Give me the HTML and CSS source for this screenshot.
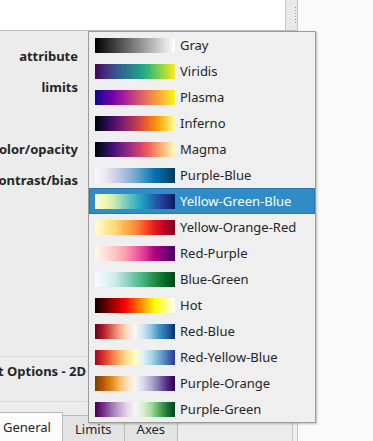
FILE: index.html
```html
<!DOCTYPE html>
<html lang="en">
<head>
    <meta charset="UTF-8">
    <meta name="viewport" content="width=device-width, initial-scale=1.0">
    <title>Colormap Picker</title>
    <link rel="stylesheet" href="styles.css">
</head>
<body>

<div class="left">
    <!-- top widget with its scrollbar -->
    <div class="top-row">
        <div class="top-white"></div>
        <div class="top-scroll"><span class="grip"></span></div>
    </div>

    <!-- settings panel -->
    <div class="panel">
        <div class="form">
            <div class="label-row"><span>attribute</span></div>
            <div class="label-row"><span>limits</span></div>
            <div class="label-row"></div>
            <div class="label-row"><span>color/opacity</span></div>
            <div class="label-row"><span>contrast/bias</span></div>
        </div>

        <div class="group-title"><span>Plot Options - 2D</span></div>

        <div class="tabs">
            <div class="tab active">General</div>
            <div class="tab">Limits</div>
            <div class="tab">Axes</div>
        </div>
    </div>
</div>

<div class="right"></div>

<!-- Colormap dropdown -->
<ul class="popup">
    <li><span class="swatch cm-gray"></span>Gray</li>
    <li><span class="swatch cm-viridis"></span>Viridis</li>
    <li><span class="swatch cm-plasma"></span>Plasma</li>
    <li><span class="swatch cm-inferno"></span>Inferno</li>
    <li><span class="swatch cm-magma"></span>Magma</li>
    <li><span class="swatch cm-pubu"></span>Purple-Blue</li>
    <li class="selected"><span class="swatch cm-ylgnbu"></span>Yellow-Green-Blue</li>
    <li><span class="swatch cm-ylorrd"></span>Yellow-Orange-Red</li>
    <li><span class="swatch cm-rdpu"></span>Red-Purple</li>
    <li><span class="swatch cm-bugn"></span>Blue-Green</li>
    <li><span class="swatch cm-hot"></span>Hot</li>
    <li><span class="swatch cm-rdbu"></span>Red-Blue</li>
    <li><span class="swatch cm-rdylbu"></span>Red-Yellow-Blue</li>
    <li><span class="swatch cm-puor"></span>Purple-Orange</li>
    <li><span class="swatch cm-prgn"></span>Purple-Green</li>
</ul>

</body>
</html>
```

FILE: styles.css
```css
* { margin: 0; padding: 0; box-sizing: border-box; }
html, body { width: 373px; height: 441px; overflow: hidden; }
body { display: flex; font-family: "Noto Sans", "DejaVu Sans", sans-serif; font-size: 13px; color: #232629; background: #fafafa; position: relative; }

.left { width: 298px; display: flex; flex-direction: column; border-right: 1px solid #c4c4c4; }
.top-row { display: flex; height: 31px; border-bottom: 1px solid #bdbdbd; }
.top-white { flex: 1; background: #fff; }
.top-scroll { width: 12px; background: #e9e9e9; border-left: 1px solid #c4c4c4; position: relative; }
.grip { position: absolute; left: 9px; top: 7px; width: 1px; height: 17px; background: repeating-linear-gradient(#9a9a9a 0 1px, transparent 1px 3px); }

.panel { flex: 1; display: flex; flex-direction: column; background: linear-gradient(to right, #ececec 0 292px, #c8c8c8 292px 293px, #f0f0f0 293px); }
.form { padding-top: 9px; }
.label-row { height: 31px; width: 78px; display: flex; justify-content: flex-end; align-items: center; overflow: hidden; white-space: nowrap; font-weight: bold; }

.group-title { margin-top: 161px; height: 46px; width: 88px; border-top: 1px solid #d8d8d8; border-bottom: 1px solid #d8d8d8; display: flex; justify-content: flex-end; align-items: flex-start; padding-top: 5px; overflow: hidden; white-space: nowrap; font-weight: bold; padding-right: 2px; }

.tabs { margin-top: 10px; display: flex; align-items: flex-end; height: 29px; }
.tab { height: 26px; padding: 4px 12px 0; background: #e3e3e3; border: 1px solid #b9b9b9; border-bottom: none; border-left: none; }
.tab.active { height: 29px; width: 63px; background: #fcfcfc; padding: 5px 0 0 3px; }

.right { flex: 1; background: #fafafa; }

.popup { position: absolute; left: 88px; top: 31px; width: 228px; height: 392px; list-style: none; background: #efefef; border: 1px solid #9b9b9b; box-shadow: 1px 1px 2px rgba(0, 0, 0, 0.25); }
.popup li { height: 26px; display: flex; align-items: center; padding-left: 6px; white-space: nowrap; }
.popup li.selected { background: #308cc6; color: #fff; border: 1px solid #2a78ab; padding-left: 5px; }
.swatch { width: 80px; height: 15px; margin-right: 5px; flex-shrink: 0; }

.cm-gray { background: linear-gradient(to right, #000, #fff); }
.cm-viridis { background: linear-gradient(to right, #440154, #482878, #3e4989, #31688e, #26828e, #1f9e89, #35b779, #6ece58, #b5de2b, #fde725); }
.cm-plasma { background: linear-gradient(to right, #0d0887, #46039f, #7201a8, #9c179e, #bd3786, #d8576b, #ed7953, #fb9f3a, #fdca26, #f0f921); }
.cm-inferno { background: linear-gradient(to right, #000004, #1b0c41, #4a0c6b, #781c6d, #a52c60, #cf4446, #ed6925, #fb9b06, #f7d13d, #fcffa4); }
.cm-magma { background: linear-gradient(to right, #000004, #180f3d, #440f76, #721f81, #9e2f7f, #cd4071, #f1605d, #fd9668, #feca8d, #fcfdbf); }
.cm-pubu { background: linear-gradient(to right, #fff7fb, #ece7f2, #d0d1e6, #a6bddb, #74a9cf, #3690c0, #0570b0, #045a8d, #023858); }
.cm-ylgnbu { background: linear-gradient(to right, #ffffd9, #edf8b1, #c7e9b4, #7fcdbb, #41b6c4, #1d91c0, #225ea8, #253494, #081d58); }
.cm-ylorrd { background: linear-gradient(to right, #ffffcc, #ffeda0, #fed976, #feb24c, #fd8d3c, #fc4e2a, #e31a1c, #bd0026, #800026); }
.cm-rdpu { background: linear-gradient(to right, #fff7f3, #fde0dd, #fcc5c0, #fa9fb5, #f768a1, #dd3497, #ae017e, #7a0177, #49006a); }
.cm-bugn { background: linear-gradient(to right, #f7fcfd, #e5f5f9, #ccece6, #99d8c9, #66c2a4, #41ae76, #238b45, #006d2c, #00441b); }
.cm-hot { background: linear-gradient(to right, #0b0000, #ff0000 37.5%, #ffff00 75%, #ffffff); }
.cm-rdbu { background: linear-gradient(to right, #67001f, #b2182b, #d6604d, #f4a582, #fddbc7, #f7f7f7, #d1e5f0, #92c5de, #4393c3, #2166ac, #053061); }
.cm-rdylbu { background: linear-gradient(to right, #a50026, #d73027, #f46d43, #fdae61, #fee090, #ffffbf, #e0f3f8, #abd9e9, #74add1, #4575b4, #313695); }
.cm-puor { background: linear-gradient(to right, #7f3b08, #b35806, #e08214, #fdb863, #fee0b6, #f7f7f7, #d8daeb, #b2abd2, #8073ac, #542788, #2d004b); }
.cm-prgn { background: linear-gradient(to right, #40004b, #762a83, #9970ab, #c2a5cf, #e7d4e8, #f7f7f7, #d9f0d3, #a6dba0, #5aae61, #1b7837, #00441b); }
```
